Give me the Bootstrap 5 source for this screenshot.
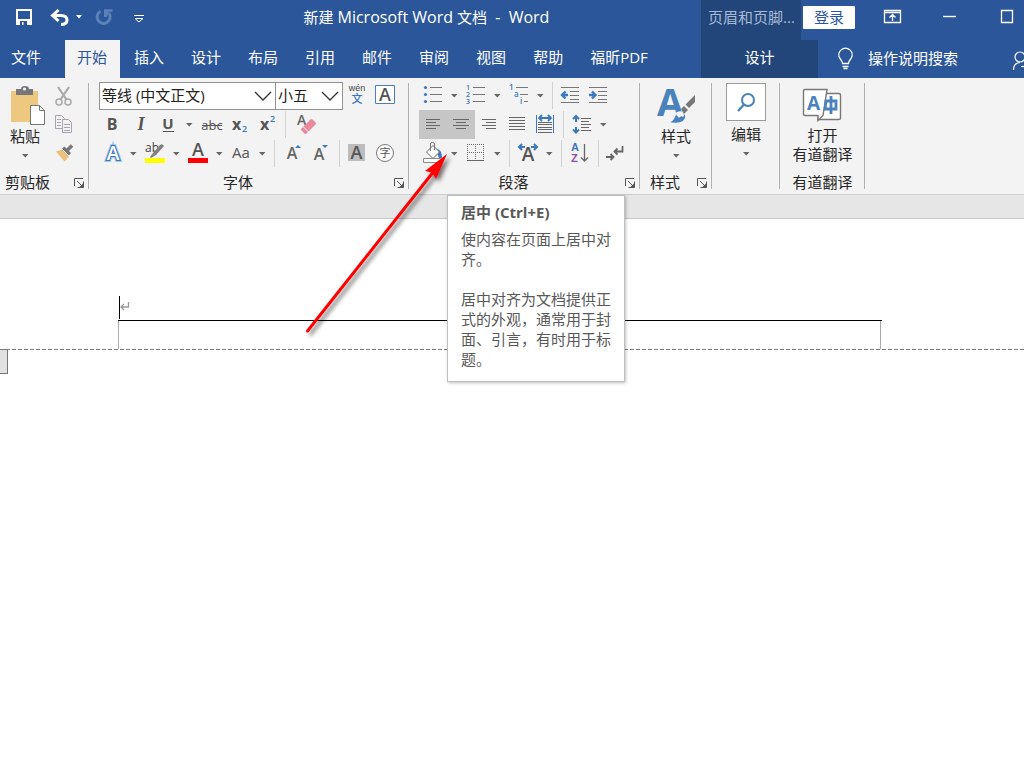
<!DOCTYPE html>
<html lang="zh-CN">
<head>
<meta charset="utf-8">
<meta name="viewport" content="width=device-width, initial-scale=1">
<title>新建 Microsoft Word 文档 - Word</title>
<link href="https://cdn.jsdelivr.net/npm/bootstrap@5.3.0/dist/css/bootstrap.min.css" rel="stylesheet">
<style>
:root { --blue:#2b579a; --dark:#22457a; --ribbon:#f3f3f3; --line:#b1b1b1; --ink:#262626; }
body { font-family:"Open Sans","Noto Sans CJK SC",sans-serif; font-size:15px; line-height:20px; color:var(--ink); background:#fff; overflow-x:hidden; }
button { font:inherit; color:inherit; background:none; border:0; padding:0; }
svg { display:block; flex:none; overflow:visible; }
.topbar { background:var(--blue); color:#fff; overflow:hidden; }
.title-row { height:40px; }
.title-row .line { height:34px; }
.doc-title { padding-bottom:1px; }
.latin { font-size:16px; }
.quick { flex:0 0 152px; }
.right-block { flex:0 0 323px; overflow:hidden; }
.ctx-head { flex:0 0 100px; background:var(--dark); color:#a9bbd6; padding-left:7px; height:40px; }
.login { background:#fff; color:var(--blue); width:52px; height:23px; margin:0 9px 0 2px; border-radius:1px; }
.win { flex:0 0 57px; height:34px; }
.tabs-row { height:38px; }
.tab-link { display:flex; align-items:center; height:38px; padding:0 12px 4px; color:#fff; text-decoration:none; white-space:nowrap; }
.tab-link.file { padding-left:11px; margin-right:9px; }
.tab-link.on { background:var(--ribbon); color:var(--blue); width:55px; margin-right:-1px; }
.tabs { gap:3px; }
.ctx-tab { flex:0 0 117px; background:var(--dark); justify-content:center; }
.search { padding-bottom:2px; }
.ribbon { background:var(--ribbon); padding-top:3px; border-bottom:1px solid #cfcfcf; }
.group { flex:none; background:linear-gradient(var(--line),var(--line)) right 0 top 2px/1px 106px no-repeat; }
.g-clip { width:89px; } .g-font { width:320px; padding-left:9px; } .g-para { width:231px; padding-left:10px; }
.g-style { width:72px; } .g-edit { width:68px; } .g-open { width:85px; }
.body-area { height:87px; }
.tool-row { height:29px; display:flex; }
.tool { width:28px; height:29px; }
.drop { width:15px; height:29px; }
.tool.on { background:#c6c6c6; }
.vsep { width:9px; height:29px; background:linear-gradient(#d2d2d2,#d2d2d2) center/1px 27px no-repeat; }
.caption { height:26px; padding-top:2px; display:flex; align-items:center; }
.caption .name { flex:1; text-align:center; }
.g-clip .name { text-align:left; padding-left:5px; }
.g-font .caption { margin-left:-9px; } .g-para .caption { margin-left:-10px; }
.launch { width:22px; height:22px; padding-left:1px; padding-top:1px; }
.combo { padding:1px 1px 0; }
.combo select { appearance:none; height:28px; border:1px solid #919191; border-radius:0; background:#fff url("data:image/svg+xml,%3Csvg xmlns='http://www.w3.org/2000/svg' width='18' height='10'%3E%3Cpath d='M1 1l8 8 8-8' fill='none' stroke='%23333' stroke-width='1.3'/%3E%3C/svg%3E") right 3px center no-repeat; padding:0 2px 2px; font:inherit; color:#222; }
.face { width:177px; } .size { width:68px; margin-left:-1px; }
.big { display:flex; flex-direction:column; align-items:center; height:87px; }
.big .pic { height:45px; }
.g-open .big { line-height:19px; }
.paste { width:50px; }
.find { width:40px; height:38px; margin:2px 0 3px; border:1px solid #9a9a9a; background:#fff; }
.strip { height:24px; background:#e6e6e6; border-bottom:1px solid #c6c6c6; }
.tip { position:absolute; left:38px; top:114px; width:178px; z-index:3; background:#fff; border:1px solid #bfbfbf; box-shadow:1px 1px 3px rgba(0,0,0,.25); padding:6px 13px 12px; color:#595959; }
.tip h2 { font-size:15px; line-height:20px; font-weight:700; margin:0 0 7px; }
.tip p { margin:0; } .tip p + p { margin-top:20px; }
.pointer { position:absolute; left:-109px; top:64px; z-index:4; pointer-events:none; }
.page { padding-top:77px; }
.head-para { margin:0 142px 0 118px; height:25px; border-bottom:1px solid #000; }
.corner { margin:0 143px 0 118px; height:28px; border:solid #ababab; border-width:0 1px; }
.edge { height:1px; background:repeating-linear-gradient(90deg,#7a7a7a 0 4px,#fff 4px 6px); }
.mark-tab { width:8px; height:25px; margin-top:-1px; background:#e1e1e1; border:1px solid #777; border-left:0; }
.editor { min-height:calc(100vh - 219px); }
</style>
</head>
<body>
<svg width="0" height="0" class="position-absolute" aria-hidden="true">
  <symbol id="dn" viewBox="0 0 7 4"><path d="M0 0h6.500L3.300 3.500z" fill="#666"/></symbol>
  <symbol id="la" viewBox="0 0 10 10"><path d="M.5 8V.5H9M3 3l5 5M9.500 3.500v6h-6" fill="none" stroke="#555"/><path d="M9.500 5v4.500H5z" fill="#555"/></symbol>
</svg>

<header class="topbar">
  <div class="title-row d-flex">
    <div class="quick line d-flex align-items-center">
      <button aria-label="保存"><svg width="44" height="34"><path fill-rule="evenodd" d="M16 9h16v16H16zM18 11v8h12v-8zM20 21v4h2v-3h1.500v3H27v-4z" fill="#fff"/></svg></button>
      <button aria-label="撤消"><svg width="28" height="34"><path d="M9 15.500h8q6 0 6 4.500t-6 4.500" fill="none" stroke="#fff" stroke-width="3"/><path d="M14.500 10l-6 5.500 6 5.500" fill="none" stroke="#fff" stroke-width="3"/></svg></button>
      <button aria-label="撤消选项"><svg width="14" height="34"><path d="M4 15h6l-3 3.500z" fill="#fff"/></svg></button>
      <button aria-label="重复"><svg width="36" height="34"><path d="M14.500 11.200a6.500 6.500 0 1 0 8.500 2" fill="none" stroke="#5c80b7" stroke-width="3"/><path d="M18 9.200h8.500v2.600h-3.300L20.500 17H18z" fill="#5c80b7"/></svg></button>
      <button aria-label="自定义"><svg width="30" height="34"><path d="M12 15.500h10" stroke="#fff"/><path d="M13 18.500h8l-4 3.500z" fill="none" stroke="#fff"/></svg></button>
    </div>
    <div class="doc-title line flex-grow-1 d-flex align-items-center justify-content-center text-nowrap"><div>新建 <span class="latin">Microsoft Word</span> 文档<span class="latin">&nbsp; -&nbsp; Word</span></div></div>
    <div class="right-block d-flex">
      <div class="ctx-head"><div class="line d-flex align-items-center">页眉和页脚...</div></div>
      <div class="line d-flex align-items-center">
        <button class="login">登录</button>
        <button class="win" aria-label="功能区显示选项"><svg width="57" height="34"><path d="M20.500 10.500h16v12h-16zM20.500 12.500h16M28.500 21v-6M25.500 17.500l3-3 3 3" fill="none" stroke="#fff" stroke-width="1.300"/></svg></button>
        <button class="win" aria-label="最小化"><svg width="57" height="34"><path d="M22 16.500h13" stroke="#fff" stroke-width="1.400"/></svg></button>
        <button class="win" aria-label="最大化"><svg width="57" height="34"><path d="M23.500 10.500h11v12h-11z" fill="none" stroke="#fff" stroke-width="1.300"/></svg></button>
      </div>
    </div>
  </div>
  <div class="tabs-row d-flex">
    <nav class="tabs d-flex flex-grow-1">
      <a class="tab-link file" href="#">文件</a>
      <a class="tab-link on" href="#">开始</a>
      <a class="tab-link" href="#">插入</a>
      <a class="tab-link" href="#">设计</a>
      <a class="tab-link" href="#">布局</a>
      <a class="tab-link" href="#">引用</a>
      <a class="tab-link" href="#">邮件</a>
      <a class="tab-link" href="#">审阅</a>
      <a class="tab-link" href="#">视图</a>
      <a class="tab-link" href="#">帮助</a>
      <a class="tab-link" href="#">福昕PDF</a>
    </nav>
    <div class="right-block d-flex align-items-center">
      <a class="tab-link ctx-tab" href="#">设计</a>
      <svg width="50" height="38"><g fill="none" stroke="#fff" stroke-width="1.300"><path d="M24.500 23.500q0-2-2.500-5a6.600 6.600 0 1 1 11 0q-2.500 3-2.500 5z"/><path d="M24.500 26.500h6M25.500 28.500h4"/></g></svg>
      <a class="search text-white text-decoration-none text-nowrap" href="#">操作说明搜索</a>
      <svg width="130" height="38"><g fill="none" stroke="#fff" stroke-width="1.200"><circle cx="62" cy="17" r="5"/><path d="M55.500 30q0-7 6.500-7.500"/><path d="M63 26.500h6"/></g></svg>
    </div>
  </div>
</header>

<section class="ribbon d-flex" aria-label="功能区">
  <div class="group g-clip">
    <div class="body-area d-flex">
      <button class="big paste">
        <svg class="pic" width="50" height="45"><path d="M11 10h27v31H11z" fill="#eec87f"/><path d="M16 8h5q0-3 4-3t4 3h4v6H16z" fill="#777"/><circle cx="24.500" cy="8" r="1.600" fill="#f3f3f3"/><path d="M30.500 24.500h9l5 5v14h-14z" fill="#fff" stroke="#777"/><path d="M39.500 24.500v5h5" fill="none" stroke="#777"/></svg>
        <span>粘贴</span>
        <svg width="7" height="4" class="mt-2"><use href="#dn"/></svg>
      </button>
      <div>
        <div class="tool-row"><button class="tool" aria-label="剪切"><svg width="28" height="29"><g fill="none" stroke="#a9a9a9" stroke-width="1.500"><circle cx="9" cy="21" r="3"/><circle cx="18" cy="21" r="3"/><path d="M8 6l8.500 12.500M19 6l-8.500 12.500" stroke-width="2.200"/></g></svg></button></div>
        <div class="tool-row"><button class="tool" aria-label="复制"><svg width="28" height="29"><g fill="#f3f3f3" stroke="#aaa2b0"><path d="M5.500 5.500h6l3 3v10h-9z"/><path d="M12.500 9.500h6l3 3v10h-9z"/><path d="M7 9.500h4M7 12.500h4M7 15.500h4M14 14.500h6M14 17.500h6M14 20.500h6"/></g></svg></button></div>
        <div class="tool-row"><button class="tool" aria-label="格式刷"><svg width="28" height="29"><path d="M6 12.500l6.500-2 6.500 7-4.500 5z" fill="#eec07a"/><path d="M11.500 10l3-2.500 6.500 6.500-2.500 3z" fill="#777"/><path d="M17 11.500l5-5" stroke="#777" stroke-width="3.500"/><path d="M12 10l7 7" stroke="#f3f3f3"/></svg></button></div>
      </div>
    </div>
    <div class="caption"><span class="name">剪贴板</span><button class="launch" aria-label="剪贴板选项"><svg class="mx-auto" width="10" height="10"><use href="#la"/></svg></button></div>
  </div>

  <div class="group g-font">
    <div class="body-area">
      <div class="tool-row">
        <div class="combo d-flex"><select class="face" aria-label="字体"><option>等线 (中文正文)</option></select><select class="size" aria-label="字号"><option>小五</option></select></div>
        <button class="tool" aria-label="拼音指南"><svg width="28" height="29"><text x="13" y="10" text-anchor="middle" font-family="Liberation Sans" font-size="9" fill="#444">wén</text><text x="13" y="22" text-anchor="middle" font-family="Liberation Sans, Noto Sans CJK SC" font-size="11" font-weight="500" fill="#3b78be">文</text></svg></button>
        <button class="tool" aria-label="字符边框"><svg width="28" height="29"><path d="M3.500 4.500h19v18h-19z" fill="#fff" stroke="#4a7ebb"/><text x="13" y="20" text-anchor="middle" font-size="18" font-weight="600" fill="#555">A</text></svg></button>
      </div>
      <div class="tool-row">
        <button class="tool" aria-label="加粗"><svg width="28" height="29"><text x="14" y="20" text-anchor="middle" font-size="16" font-weight="700" fill="#555">B</text></svg></button>
        <button class="tool" aria-label="倾斜"><svg width="28" height="29"><text x="15" y="20" text-anchor="middle" font-family="Liberation Serif" font-size="18" font-style="italic" font-weight="700" fill="#555">I</text></svg></button>
        <button class="tool" aria-label="下划线"><svg width="28" height="29"><text x="14" y="19" text-anchor="middle" font-size="15" font-weight="700" fill="#555">U</text><path d="M9 21.500h11" stroke="#555"/></svg></button>
        <button class="drop" aria-label="下划线选项"><svg class="mx-auto" width="7" height="4"><use href="#dn"/></svg></button>
        <button class="tool" aria-label="删除线"><svg width="28" height="29"><text x="15" y="20" text-anchor="middle" font-size="13" fill="#555">abc</text><path d="M5 15.500h20" stroke="#555"/></svg></button>
        <button class="tool" aria-label="下标"><svg width="28" height="29"><text x="7" y="20" font-size="16" font-weight="700" fill="#555">x</text><text x="17" y="22" font-size="9" font-weight="600" fill="#3b78be">2</text></svg></button>
        <button class="tool" aria-label="上标"><svg width="28" height="29"><text x="7" y="20" font-size="16" font-weight="700" fill="#555">x</text><text x="17" y="12" font-size="9" font-weight="600" fill="#3b78be">2</text></svg></button>
        <span class="vsep"></span>
        <button class="tool" aria-label="清除格式"><svg width="28" height="29"><text x="7" y="15" font-size="14" font-weight="600" fill="#666">A</text><path d="M11.500 18.500l9-9q1-1 2 0l3 3q1 1 0 2l-9 9q-1 1-2 0l-3-3q-1-1 0-2z" fill="#e88a9b"/><path d="M13 16.500l5.500 5.500" stroke="#f3f3f3"/></svg></button>
      </div>
      <div class="tool-row">
        <button class="tool" aria-label="文本效果"><svg width="28" height="29"><g text-anchor="middle" font-size="19" font-weight="600"><text x="15" y="21" fill="#fff" stroke="#a9c8e8" stroke-width="4">A</text><text x="15" y="21" fill="#fff" stroke="#3b78be" stroke-width="2.200">A</text><text x="15" y="21" fill="#fff">A</text></g></svg></button>
        <button class="drop" aria-label="文本效果选项"><svg class="mx-auto" width="7" height="4"><use href="#dn"/></svg></button>
        <button class="tool" aria-label="突出显示"><svg width="28" height="29"><text x="4" y="13" font-size="12" fill="#444">ab</text><path d="M9 18l3-4 7-8q2-2 4 1l-8 9-5 3z" fill="#808080"/><path d="M4 19h20v5H4z" fill="#ff0"/></svg></button>
        <button class="drop" aria-label="突出显示颜色"><svg class="mx-auto" width="7" height="4"><use href="#dn"/></svg></button>
        <button class="tool" aria-label="字体颜色"><svg width="28" height="29"><text x="14" y="17" text-anchor="middle" font-size="18" font-weight="600" fill="#555">A</text><path d="M4 19h20v5H4z" fill="red"/></svg></button>
        <button class="drop" aria-label="字体颜色选项"><svg class="mx-auto" width="7" height="4"><use href="#dn"/></svg></button>
        <button class="tool" aria-label="更改大小写"><svg width="28" height="29"><text x="14" y="19" text-anchor="middle" font-size="15" fill="#555">Aa</text></svg></button>
        <button class="drop" aria-label="大小写选项"><svg class="mx-auto" width="7" height="4"><use href="#dn"/></svg></button>
        <span class="vsep"></span>
        <button class="tool" aria-label="增大字号"><svg width="28" height="29"><text x="13" y="20" text-anchor="middle" font-size="16" font-weight="600" fill="#666">A</text><path d="M16 9h6l-3-3z" fill="#3b78be"/></svg></button>
        <button class="tool" aria-label="减小字号"><svg width="28" height="29"><text x="12" y="21" text-anchor="middle" font-size="16" font-weight="600" fill="#666">A</text><path d="M15 6h6l-3 3z" fill="#3b78be"/></svg></button>
        <span class="vsep"></span>
        <button class="tool" aria-label="字符底纹"><svg width="28" height="29"><path d="M4 5h17v17H4z" fill="#bdbdbd"/><text x="12.500" y="20" text-anchor="middle" font-size="18" font-weight="600" fill="#555">A</text></svg></button>
        <button class="tool" aria-label="带圈字符"><svg width="28" height="29"><circle cx="13" cy="14" r="8.500" fill="#fff" stroke="#777"/><text x="13" y="18" text-anchor="middle" font-size="11" fill="#555">字</text></svg></button>
      </div>
    </div>
    <div class="caption"><span class="name">字体</span><button class="launch" aria-label="字体选项"><svg class="mx-auto" width="10" height="10"><use href="#la"/></svg></button></div>
  </div>

  <div class="group g-para position-relative">
    <div class="body-area">
      <div class="tool-row">
        <button class="tool" aria-label="项目符号"><svg width="28" height="29"><path d="M11 6.500h12M11 13.500h12M11 20.500h12" stroke="#777"/><g fill="#3b78be"><circle cx="6.500" cy="6.500" r="1.600"/><circle cx="6.500" cy="13.500" r="1.600"/><circle cx="6.500" cy="20.500" r="1.600"/></g></svg></button>
        <button class="drop" aria-label="项目符号选项"><svg class="mx-auto" width="7" height="4"><use href="#dn"/></svg></button>
        <button class="tool" aria-label="编号"><svg width="28" height="29"><path d="M11 6.500h12M11 13.500h12M11 20.500h12" stroke="#777"/><g fill="#3b78be" font-size="7" font-weight="600"><text x="4" y="9">1</text><text x="4" y="16">2</text><text x="4" y="23">3</text></g></svg></button>
        <button class="drop" aria-label="编号选项"><svg class="mx-auto" width="7" height="4"><use href="#dn"/></svg></button>
        <button class="tool" aria-label="多级列表"><svg width="28" height="29"><path d="M11 6.500h12M15 13.500h8M19 20.500h4" stroke="#777"/><g fill="#3b78be" font-size="8" font-weight="600"><text x="4" y="9">1</text><text x="9" y="16">a</text><text x="15" y="23">i</text></g></svg></button>
        <button class="drop" aria-label="多级列表选项"><svg class="mx-auto" width="7" height="4"><use href="#dn"/></svg></button>
        <span class="vsep"></span>
        <button class="tool" aria-label="减少缩进量"><svg width="28" height="29"><path d="M4 6.500h18M13 10.500h9M13 14.500h9M13 18.500h9M4 21.500h18" stroke="#777"/><path d="M5 14h6M8.500 10.500L5 14l3.500 3.500" fill="none" stroke="#3b78be" stroke-width="2.400"/></svg></button>
        <button class="tool" aria-label="增加缩进量"><svg width="28" height="29"><path d="M4 6.500h18M13 10.500h9M13 14.500h9M13 18.500h9M4 21.500h18" stroke="#777"/><path d="M4 14h6M7 10.500l3.500 3.500L7 17.500" fill="none" stroke="#3b78be" stroke-width="2.400"/></svg></button>
      </div>
      <div class="tool-row">
        <button class="tool on" aria-label="左对齐"><svg width="28" height="29"><path d="M7 9.500h14M7 12.500h10M7 15.500h14M7 18.500h10" stroke="#666"/></svg></button>
        <button class="tool on" aria-label="居中" aria-describedby="centerTip"><svg width="28" height="29"><path d="M6 9.500h16M9 12.500h10M6 15.500h16M9 18.500h10" stroke="#666"/></svg></button>
        <button class="tool" aria-label="右对齐"><svg width="28" height="29"><path d="M7 9.500h14M11 12.500h10M7 15.500h14M11 18.500h10" stroke="#666"/></svg></button>
        <button class="tool" aria-label="两端对齐"><svg width="28" height="29"><path d="M6 7.500h16M6 10.500h16M6 13.500h16M6 16.500h16M6 19.500h16" stroke="#666"/></svg></button>
        <button class="tool" aria-label="分散对齐"><svg width="28" height="29"><path d="M5.500 5v18M22.500 5v18" stroke="#3b78be"/><path d="M8 8h12M11 5L8 8l3 3M17 5l3 3-3 3" fill="none" stroke="#3b78be" stroke-width="1.800"/><path d="M7 12.500h14M7 14.500h14M7 17.500h14M7 19.500h14M7 22.500h14" stroke="#666"/></svg></button>
        <span class="vsep"></span>
        <button class="tool" aria-label="行距"><svg width="28" height="29"><path d="M8 6v6M8 17v6M5 9l3-3 3 3M5 19.500l3 3 3-3" fill="none" stroke="#3b78be" stroke-width="2"/><path d="M13 8.500h10M13 11.500h8M13 14.500h10M13 17.500h8M13 20.500h10" stroke="#666"/></svg></button>
        <button class="drop" aria-label="行距选项"><svg class="mx-auto" width="7" height="4"><use href="#dn"/></svg></button>
      </div>
      <div class="tool-row">
        <button class="tool" aria-label="底纹"><svg width="28" height="29"><path d="M17 10q6 0 6 9h-3z" fill="#3b78be"/><path d="M14 6.500l6.500 6.500-6.500 6.500L7.500 13z" fill="#fff" stroke="#666"/><path d="M11.500 12V5q0-1.500 2-1.500t2 1.500v6" fill="none" stroke="#777"/><path d="M4.500 19.500h17v4h-17z" fill="#fff" stroke="#888"/></svg></button>
        <button class="drop" aria-label="底纹颜色"><svg class="mx-auto" width="7" height="4"><use href="#dn"/></svg></button>
        <button class="tool" aria-label="边框"><svg width="28" height="29"><path d="M5 5.500h17M5 13.500h17M5.500 5v17M13.500 5v17M21.500 5v17" stroke="#666" stroke-dasharray="1 1"/><path d="M5 21.500h17" stroke="#666"/></svg></button>
        <button class="drop" aria-label="边框选项"><svg class="mx-auto" width="7" height="4"><use href="#dn"/></svg></button>
        <span class="vsep"></span>
        <button class="tool" aria-label="中文版式"><svg width="28" height="29"><text x="14" y="22" text-anchor="middle" font-size="19" font-weight="600" fill="#555">A</text><path d="M6 8h5M17 8h5M8 5L5 8l3 3M20 5l3 3-3 3" fill="none" stroke="#3b78be" stroke-width="2"/></svg></button>
        <button class="drop" aria-label="中文版式选项"><svg class="mx-auto" width="7" height="4"><use href="#dn"/></svg></button>
        <span class="vsep"></span>
        <button class="tool" aria-label="排序"><svg width="28" height="29"><g font-family="Liberation Sans" font-size="11" font-weight="700"><text x="5" y="12" fill="#3b78be">A</text><text x="5" y="23" fill="#8a4fa8">Z</text></g><path d="M18.500 5v17M15 18.500l3.500 3.500 3.500-3.500" fill="none" stroke="#666" stroke-width="1.300"/></svg></button>
        <span class="vsep"></span>
        <button class="tool" aria-label="显示编辑标记"><svg width="28" height="29"><path d="M19.500 7v5.500H12M14.500 9.500l-3 3 3 3M3 18h8M7.500 15l3 3-3 3" fill="none" stroke="#666" stroke-width="1.800"/></svg></button>
      </div>
    </div>
    <div class="caption"><span class="name">段落</span><button class="launch" aria-label="段落选项"><svg class="mx-auto" width="10" height="10"><use href="#la"/></svg></button></div>

    <div class="tip" id="centerTip" role="tooltip">
      <h2>居中 (Ctrl+E)</h2>
      <p>使内容在页面上居中对齐。</p>
      <p>居中对齐为文档提供正式的外观，通常用于封面、引言，有时用于标题。</p>
    </div>
    <svg class="pointer" width="160" height="200" aria-hidden="true">
      <defs><filter id="sh" x="-10%" y="-10%" width="130%" height="130%"><feDropShadow dx="3" dy="3" stdDeviation="2" flood-opacity=".55"/></filter></defs>
      <g filter="url(#sh)" fill="red"><path d="M7.500 186L134 26" stroke="red" stroke-width="3" stroke-linecap="round"/><path d="M147 9L125 26l7 1.500 4 6.500z"/></g>
    </svg>
  </div>

  <div class="group g-style">
    <button class="big w-100">
      <svg class="pic" width="72" height="45"><text x="17" y="35" font-size="38" font-weight="700" fill="#4a82bd">A</text><path d="M27 42q6-2 7-6 2-5 7-5 5 1 5 5-1 6-10 6.500-5 0-9-.5z" fill="#4a82bd" stroke="#f3f3f3" stroke-width="1.500"/><path d="M36 34q3-3.500 7-2 2 2 0 4-2-2-4 1-1-2-3-3z" fill="#f3f3f3"/><path d="M41 28l3-3 4 4-4 4z" fill="#777"/><path d="M45.500 23.500L55 14v7l-6 6z" fill="#777"/></svg>
      <span>样式</span>
      <svg width="7" height="4" class="mt-2"><use href="#dn"/></svg>
    </button>
    <div class="caption"><span class="name">样式</span><button class="launch" aria-label="样式选项"><svg class="mx-auto" width="10" height="10"><use href="#la"/></svg></button></div>
  </div>

  <div class="group g-edit">
    <button class="big w-100">
      <span class="find"><svg width="38" height="36"><circle cx="21" cy="16" r="6" fill="none" stroke="#4a82bd" stroke-width="2"/><path d="M17 20.500L11 27" stroke="#4a82bd" stroke-width="2.400"/></svg></span>
      <span>编辑</span>
      <svg width="7" height="4" class="mt-2"><use href="#dn"/></svg>
    </button>
  </div>

  <div class="group g-open">
    <button class="big w-100">
      <svg class="pic" width="85" height="45"><path d="M40 12.500h19q1.500 0 1.500 1.500v23q0 1.500-1.500 1.500H38z" fill="#fff" stroke="#777" stroke-width="1.400"/><path d="M25 8.500h22l-4 26-5 5v-5H25q-1.500 0-1.500-1.500V10q0-1.500 1.500-1.500z" fill="#fff" stroke="#777" stroke-width="1.400"/><text x="27" y="29" font-size="19" font-weight="700" fill="#4a82bd">A</text><path d="M46 20h10v8H45zM51 15v18" fill="none" stroke="#4a82bd" stroke-width="2.800"/></svg>
      <span>打开</span>
      <span>有道翻译</span>
    </button>
    <div class="caption"><span class="name">有道翻译</span></div>
  </div>
</section>

<main class="editor">
  <div class="strip"></div>
  <div class="page">
    <div class="head-para"><svg width="14" height="24"><path d="M1.500 0v23" stroke="#000"/><path d="M10.500 6v5H3M6 8l-3 3 3 3" fill="none" stroke="#999" stroke-width="1.300"/></svg></div>
    <div class="corner"></div>
    <div class="edge"></div>
    <div class="mark-tab"></div>
  </div>
</main>
<script src="https://cdn.jsdelivr.net/npm/bootstrap@5.3.0/dist/js/bootstrap.bundle.min.js"></script>
</body>
</html>
